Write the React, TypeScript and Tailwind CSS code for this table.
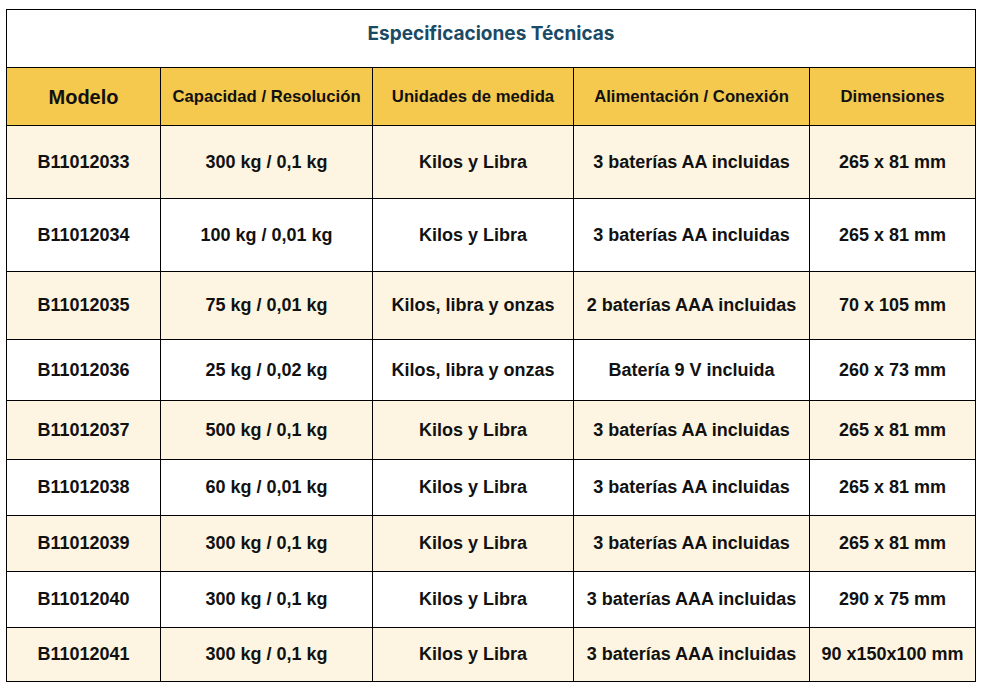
import React from "react";

const rows: [string, string, string, string, string, number][] = [
  ["B11012033", "300 kg / 0,1 kg", "Kilos y Libra", "3 baterías AA incluidas", "265 x 81 mm", 73],
  ["B11012034", "100 kg / 0,01 kg", "Kilos y Libra", "3 baterías AA incluidas", "265 x 81 mm", 73],
  ["B11012035", "75 kg / 0,01 kg", "Kilos, libra y onzas", "2 baterías AAA incluidas", "70 x 105 mm", 68],
  ["B11012036", "25 kg / 0,02 kg", "Kilos, libra y onzas", "Batería 9 V incluida", "260 x 73 mm", 61],
  ["B11012037", "500 kg / 0,1 kg", "Kilos y Libra", "3 baterías AA incluidas", "265 x 81 mm", 59],
  ["B11012038", "60 kg / 0,01 kg", "Kilos y Libra", "3 baterías AA incluidas", "265 x 81 mm", 56],
  ["B11012039", "300 kg / 0,1 kg", "Kilos y Libra", "3 baterías AA incluidas", "265 x 81 mm", 56],
  ["B11012040", "300 kg / 0,1 kg", "Kilos y Libra", "3 baterías AAA incluidas", "290 x 75 mm", 56],
  ["B11012041", "300 kg / 0,1 kg", "Kilos y Libra", "3 baterías AAA incluidas", "90 x150x100 mm", 54],
];

export default function App() {
  return (
    <div className="w-[988px] h-[691px] bg-white pt-[9px] pl-[6px]">
      <table
        className="table-fixed border-collapse w-[969px] text-[#111] font-bold"
        style={{ fontFamily: '"Liberation Sans", Arial, sans-serif' }}
      >
        <colgroup>
          <col className="w-[154px]" />
          <col className="w-[212px]" />
          <col className="w-[201px]" />
          <col className="w-[236px]" />
          <col className="w-[166px]" />
        </colgroup>
        <thead>
          <tr className="h-[58px]">
            <th
              colSpan={5}
              className="border border-black bg-white text-[19px] font-bold text-[#1b4a65] text-center pb-[9px]"
              style={{ fontFamily: 'Inter, "Noto Sans", sans-serif' }}
            >
              Especificaciones Técnicas
            </th>
          </tr>
          <tr className="h-[58px] bg-[#f5c94d]">
            <th className="border border-black text-[20px] font-bold">Modelo</th>
            <th className="border border-black text-[16.7px] font-bold">Capacidad / Resolución</th>
            <th className="border border-black text-[16.7px] font-bold">Unidades de medida</th>
            <th className="border border-black text-[16.7px] font-bold">Alimentación / Conexión</th>
            <th className="border border-black text-[16.7px] font-bold">Dimensiones</th>
          </tr>
        </thead>
        <tbody>
          {rows.map((r, i) => (
            <tr
              key={r[0]}
              className={i % 2 === 0 ? "bg-[#fdf5e1]" : "bg-white"}
              style={{ height: r[5] }}
            >
              {r.slice(0, 5).map((c, j) => (
                <td key={j} className="border border-black text-center text-[18px] p-0 whitespace-nowrap">
                  {c}
                </td>
              ))}
            </tr>
          ))}
        </tbody>
      </table>
    </div>
  );
}
